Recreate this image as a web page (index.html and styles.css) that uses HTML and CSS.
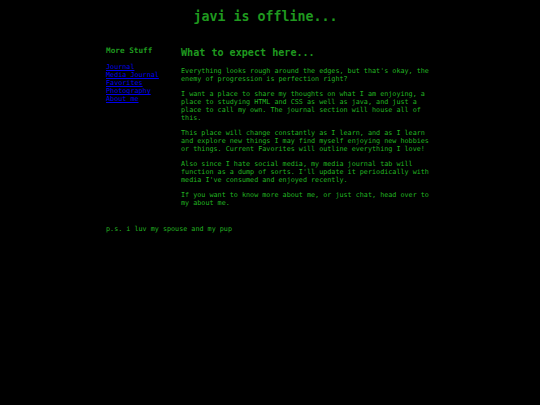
FILE: index.html
```html
<!DOCTYPE html>
<html>
<head>
<meta charset="utf-8">
<title>javi is offline...</title>
<link rel="stylesheet" href="styles.css">
</head>
<body>
<h1 class="site-title">javi is offline...</h1>
<div class="wrap">
  <div class="row">
    <nav class="sidebar">
      <h3 class="side-head">More Stuff</h3>
      <a class="side-link" href="#">Journal</a>
      <a class="side-link" href="#">Media Journal</a>
      <a class="side-link" href="#">Favorites</a>
      <a class="side-link" href="#">Photography</a>
      <a class="side-link" href="#">About me</a>
    </nav>
    <main class="content">
      <h2 class="content-head">What to expect here...</h2>
      <p class="para">Everything looks rough around the edges, but that's okay, the enemy of progression is perfection right?</p>
      <p class="para">I want a place to share my thoughts on what I am enjoying, a place to studying HTML and CSS as well as java, and just a place to call my own. The journal section will house all of this.</p>
      <p class="para">This place will change constantly as I learn, and as I learn and explore new things I may find myself enjoying new hobbies or things. Current Favorites will outline everything I love!</p>
      <p class="para">Also since I hate social media, my media journal tab will function as a dump of sorts. I'll update it periodically with media I've consumed and enjoyed recently.</p>
      <p class="para">If you want to know more about me, or just chat, head over to my about me.</p>
    </main>
  </div>
  <p class="ps">p.s. i luv my spouse and my pup</p>
</div>
</body>
</html>
```
FILE: styles.css
```css
html, body {
  background: #000;
}
body {
  margin: 0;
  font-family: "DejaVu Sans Mono", "Liberation Mono", monospace;
  color: #22b422;
}
.site-title {
  margin: 9px 0 0;
  padding-right: 9px;
  font-size: 13.3px;
  line-height: 16px;
  text-align: center;
  font-weight: bold;
  color: #1f991f;
}
.wrap {
  width: 328px;
  margin: 19px auto 0;
}
.row {
  display: flex;
  align-items: flex-start;
}
.sidebar {
  width: 75px;
  flex: none;
}
.side-head {
  margin: 2px 0 7px;
  font-size: 7.7px;
  line-height: 10px;
  font-weight: bold;
  color: #1f991f;
}
.side-link {
  display: block;
  font-size: 6.75px;
  line-height: 8px;
  color: #0000ee;
}
.content {
  width: 253px;
}
.content-head {
  margin: 3px 0 8px;
  font-size: 10.1px;
  line-height: 12px;
  font-weight: bold;
  color: #1f991f;
}
.para {
  margin: 0 0 7px;
  font-size: 6.75px;
  line-height: 8px;
}
.ps {
  margin: 11px 0 0;
  font-size: 6.75px;
  line-height: 8px;
}
```
